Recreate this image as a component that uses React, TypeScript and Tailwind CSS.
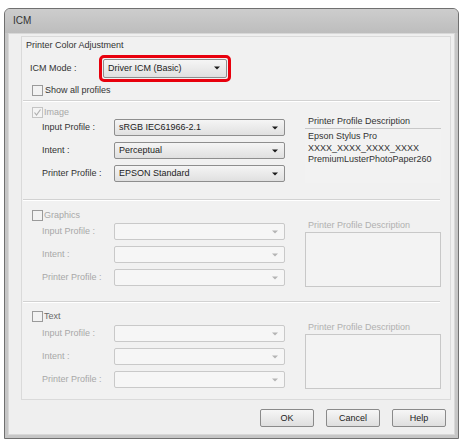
import React from "react";

const font = { fontFamily: '"Liberation Sans", Arial, sans-serif' };

function Arrow({ disabled }: { disabled?: boolean }) {
  return (
    <svg width="6" height="4" viewBox="0 0 6 4" className="shrink-0">
      <path d="M0 0.5 H6 L3 3.5 Z" fill={disabled ? "#b4b4b4" : "#1a1a1a"} />
    </svg>
  );
}

function Combo({ value, disabled, w, h = 17 }: { value?: string; disabled?: boolean; w: string; h?: number }) {
  return (
    <div
      className={
        "flex items-center justify-between pl-[4px] pr-[6px] rounded-[2px] border " +
        w +
        (disabled
          ? " border-[#c9c9c9] bg-[#f6f6f6]"
          : " border-[#8e8e8e] bg-[linear-gradient(to_bottom,#f5f5f5,#e0e0e0)]")
      }
      style={{ height: h }}
    >
      <span className="text-[9px] text-[#222] leading-none whitespace-nowrap">{value}</span>
      <Arrow disabled={disabled} />
    </div>
  );
}

function Check({ checked, disabled }: { checked?: boolean; disabled?: boolean }) {
  return (
    <div
      className={
        "w-[11px] h-[11px] border flex items-center justify-center shrink-0 " +
        (disabled ? "border-[#c4c4c4] bg-[#f4f4f4]" : "border-[#9a9a9a] bg-[#f2f2f2]")
      }
    >
      {checked && (
        <svg width="9" height="9" viewBox="0 0 9 9">
          <path d="M1.5 4.5 L3.5 7 L7.5 1.5" stroke="#b0b0b0" strokeWidth="1.2" fill="none" />
        </svg>
      )}
    </div>
  );
}

function Section({
  title,
  enabled,
  checked,
  rows,
  desc,
  rowsTop,
  titleColor,
}: {
  title: string;
  enabled?: boolean;
  checked?: boolean;
  rows: [string, string][];
  desc?: string[];
  rowsTop: string;
  titleColor: string;
}) {
  const labelColor = enabled ? "text-[#333]" : "text-[#a8a8a8]";
  return (
    <div className="flex flex-col">
      <div className="flex items-center h-[11px] pl-[10px] gap-[1px]">
        <Check checked={checked} disabled={enabled} />
        <span className={"text-[9px] leading-none " + titleColor}>{title}</span>
      </div>
      <div className={"flex " + rowsTop}>
        <div className="flex flex-col gap-[6px] w-[263px]">
          {rows.map(([label, value]) => (
            <div key={label} className="flex items-center">
              <span className={"w-[92px] pl-[20px] text-[9px] leading-none whitespace-nowrap " + labelColor}>{label}</span>
              <Combo value={value} disabled={!enabled} w="w-[171px]" />
            </div>
          ))}
        </div>
        <div className="flex flex-col ml-[20px] w-[136px] -mt-[2px]">
          <span className={"text-[9px] leading-none pl-[3px] h-[10px] " + (enabled ? "text-[#333]" : "text-[#b0b0b0]")}>
            Printer Profile Description
          </span>
          {enabled ? (
            <div className="mt-[1px] h-[55px] border-t border-[#c8c8c8] bg-[#f2f2f2] pl-[3px] pt-[2px] flex flex-col">
              {desc!.map((d) => (
                <span key={d} className="text-[9px] leading-[11.5px] text-[#333] whitespace-nowrap">
                  {d}
                </span>
              ))}
            </div>
          ) : (
            <div className="mt-[1px] h-[55px] border border-[#c8c8c8] bg-[#f3f3f3]" />
          )}
        </div>
      </div>
    </div>
  );
}

function Button({ children }: { children: string }) {
  return (
    <div className="w-[54px] h-[18px] rounded-[2px] border border-[#8a8a8a] bg-[linear-gradient(to_bottom,#f6f6f6,#dedede)] flex items-center justify-center text-[9px] text-[#222] leading-none">
      {children}
    </div>
  );
}

function Sep({ mt }: { mt: string }) {
  return <div className={"ml-[1px] w-[417px] h-[2px] border-t border-[#d2d2d2] bg-white " + mt} />;
}

export default function App() {
  return (
    <div className="w-[462px] h-[439px] bg-white overflow-hidden" style={font}>
      <div className="ml-[4px] mt-[8px] w-[455px] h-[431px] rounded-t-[6px] border border-[#707070] bg-[#c6c6c6] flex flex-col overflow-hidden">
        <div className="h-[24px] shrink-0 flex items-center pl-[8px] bg-[linear-gradient(to_bottom,#cdcdcd,#bdbdbd)]">
          <span className="text-[10px] text-[#333] leading-none">ICM</span>
        </div>
        <div className="flex-1 mx-[3px] mb-[3px] bg-[#efefef] border border-[#d8d8d8] flex flex-col">
          <div className="ml-[12px] mt-[2px] w-[430px] h-[364px] border border-[#dadada] bg-[#f1f1f1] flex flex-col">
            <div className="pl-[4px] mt-[4px] h-[10px] text-[9px] text-[#333] leading-none">Printer Color Adjustment</div>
            <div className="flex items-center mt-[3px] h-[28px]">
              <span className="pl-[8px] w-[77px] text-[9px] text-[#333] leading-none">ICM Mode :</span>
              <div className="border-[3px] border-[#e8000d] rounded-[5px] p-[1px] bg-[#f1f1f1]">
                <Combo value="Driver ICM (Basic)" w="w-[124px]" h={19} />
              </div>
            </div>
            <div className="flex items-center pl-[10px] gap-[2px] mt-[3px] h-[11px]">
              <Check />
              <span className="text-[9px] text-[#333] leading-none">Show all profiles</span>
            </div>
            <Sep mt="mt-[4px]" />
            <div className="mt-[5px]">
              <Section
                title="Image"
                enabled
                checked
                rowsTop="mt-[1px]"
                titleColor="text-[#a8a8a8]"
                rows={[
                  ["Input Profile :", "sRGB IEC61966-2.1"],
                  ["Intent :", "Perceptual"],
                  ["Printer Profile :", "EPSON Standard"],
                ]}
                desc={["Epson Stylus Pro", "XXXX_XXXX_XXXX_XXXX", "PremiumLusterPhotoPaper260"]}
              />
            </div>
            <Sep mt="mt-[16px]" />
            <div className="mt-[9px]">
              <Section
                title="Graphics"
                rowsTop="mt-[2px]"
                titleColor="text-[#a8a8a8]"
                rows={[
                  ["Input Profile :", ""],
                  ["Intent :", ""],
                  ["Printer Profile :", ""],
                ]}
              />
            </div>
            <Sep mt="mt-[14px]" />
            <div className="mt-[8px]">
              <Section
                title="Text"
                rowsTop="mt-[3px]"
                titleColor="text-[#6a6a6a]"
                rows={[
                  ["Input Profile :", ""],
                  ["Intent :", ""],
                  ["Printer Profile :", ""],
                ]}
              />
            </div>
          </div>
          <div className="flex justify-end gap-[12px] pr-[8px] mt-[9px]">
            <Button>OK</Button>
            <Button>Cancel</Button>
            <Button>Help</Button>
          </div>
        </div>
      </div>
    </div>
  );
}
